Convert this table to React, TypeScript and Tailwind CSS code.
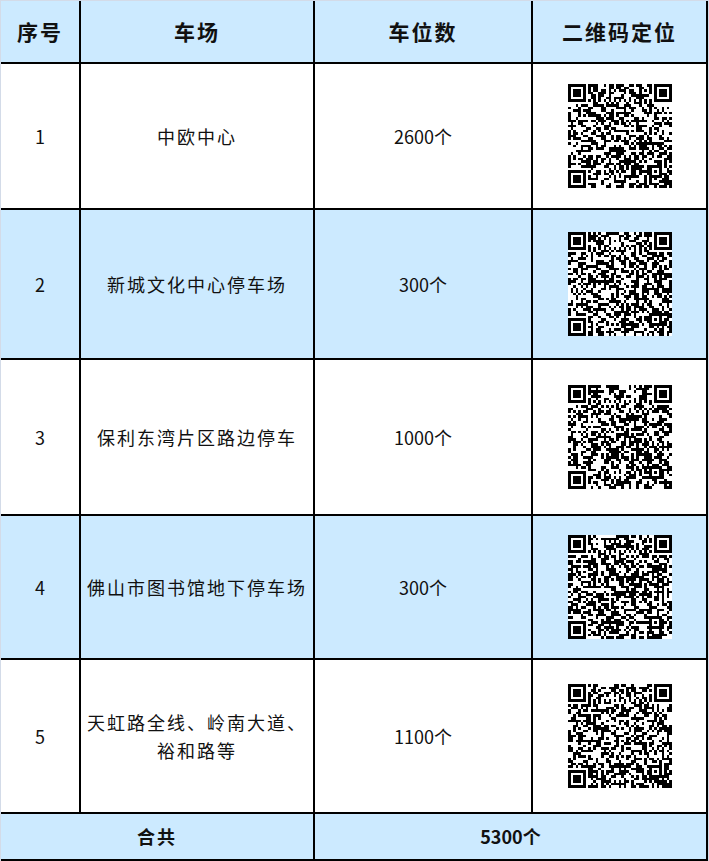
import type { ReactNode } from "react";

type Row = {
  no: number;
  name: ReactNode;
  spots: string;
  h: string;
  tint: boolean;
  seed: number;
};

const ROWS: Row[] = [
  { no: 1, name: "中欧中心", spots: "2600个", h: "h-[146px]", tint: false, seed: 11 },
  { no: 2, name: "新城文化中心停车场", spots: "300个", h: "h-[150px]", tint: true, seed: 27 },
  { no: 3, name: "保利东湾片区路边停车", spots: "1000个", h: "h-[156px]", tint: false, seed: 43 },
  { no: 4, name: "佛山市图书馆地下停车场", spots: "300个", h: "h-[144px]", tint: true, seed: 59 },
  {
    no: 5,
    name: (
      <>
        天虹路全线、岭南大道、
        <br />
        裕和路等
      </>
    ),
    spots: "1100个",
    h: "h-[154px]",
    tint: false,
    seed: 71,
  },
];

// version 6 sized grid, like the scanned codes in the original sheet
const N = 41;
const ALIGN = 34;

// Small seeded PRNG so each QR looks different but stays stable between renders.
function rng(seed: number) {
  let s = seed >>> 0;
  return () => {
    s = (s * 1664525 + 1013904223) >>> 0;
    return s / 4294967296;
  };
}

function qrModules(seed: number): boolean[][] {
  const rand = rng(seed);
  const grid: boolean[][] = [];
  const reserved: boolean[][] = [];
  for (let y = 0; y < N; y++) {
    grid.push(new Array(N).fill(false));
    reserved.push(new Array(N).fill(false));
  }
  const finder = (ox: number, oy: number) => {
    for (let y = -1; y <= 7; y++) {
      for (let x = -1; x <= 7; x++) {
        const gx = ox + x;
        const gy = oy + y;
        if (gx < 0 || gy < 0 || gx >= N || gy >= N) continue;
        reserved[gy][gx] = true;
        const inside = x >= 0 && x <= 6 && y >= 0 && y <= 6;
        const ring = x === 0 || x === 6 || y === 0 || y === 6;
        const core = x >= 2 && x <= 4 && y >= 2 && y <= 4;
        grid[gy][gx] = inside && (ring || core);
      }
    }
  };
  finder(0, 0);
  finder(N - 7, 0);
  finder(0, N - 7);
  for (let y = -2; y <= 2; y++) {
    for (let x = -2; x <= 2; x++) {
      const gx = ALIGN + x;
      const gy = ALIGN + y;
      reserved[gy][gx] = true;
      grid[gy][gx] = Math.max(Math.abs(x), Math.abs(y)) !== 1;
    }
  }
  for (let i = 8; i < N - 8; i++) {
    reserved[6][i] = true;
    reserved[i][6] = true;
    grid[6][i] = i % 2 === 0;
    grid[i][6] = i % 2 === 0;
  }
  for (let y = 0; y < N; y++) {
    for (let x = 0; x < N; x++) {
      if (!reserved[y][x]) grid[y][x] = rand() < 0.5;
    }
  }
  return grid;
}

function QrCode({ seed }: { seed: number }) {
  const grid = qrModules(seed);
  let d = "";
  grid.forEach((row, y) =>
    row.forEach((on, x) => {
      if (on) d += `M${x} ${y}h1v1h-1z`;
    }),
  );
  return (
    <svg
      width={104}
      height={104}
      viewBox={`0 0 ${N} ${N}`}
      shapeRendering="crispEdges"
      className="block"
    >
      <rect width={N} height={N} fill="#fff" />
      <path d={d} fill="#000" />
    </svg>
  );
}

const cell = "flex items-center justify-center border-r-2 border-black text-center";

export default function App() {
  return (
    <div
      lang="zh-CN"
      className="w-[709px] border-l border-r border-t border-[#d3dbe8] bg-white text-[#111]"
      style={{ fontFamily: '"Noto Sans CJK SC", "Noto Sans", sans-serif' }}
    >
      {/* header */}
      <div className="flex h-[63px] border-b-2 border-black bg-[#cceaff] text-[21px] font-bold tracking-[2px]">
        <div className={`${cell} w-[80px]`}>序号</div>
        <div className={`${cell} w-[234px]`}>车场</div>
        <div className={`${cell} w-[218px]`}>车位数</div>
        <div className={`${cell} w-[175px]`}>二维码定位</div>
      </div>

      {ROWS.map((r) => (
        <div
          key={r.no}
          className={`flex ${r.h} border-b-2 border-black text-[18px] ${
            r.tint ? "bg-[#cceaff]" : "bg-white"
          }`}
        >
          <div className={`${cell} w-[80px]`}>{r.no}</div>
          <div className={`${cell} w-[234px] leading-[28px] tracking-[2px]`}>{r.name}</div>
          <div className={`${cell} w-[218px]`}>{r.spots}</div>
          <div className={`${cell} w-[175px]`}>
            <QrCode seed={r.seed} />
          </div>
        </div>
      ))}

      {/* total */}
      <div className="flex h-[47px] border-b-2 border-black bg-[#cceaff] text-[18px] font-bold">
        <div className={`${cell} w-[314px] tracking-[2px]`}>合共</div>
        <div className={`${cell} w-[393px]`}>5300个</div>
      </div>
    </div>
  );
}
